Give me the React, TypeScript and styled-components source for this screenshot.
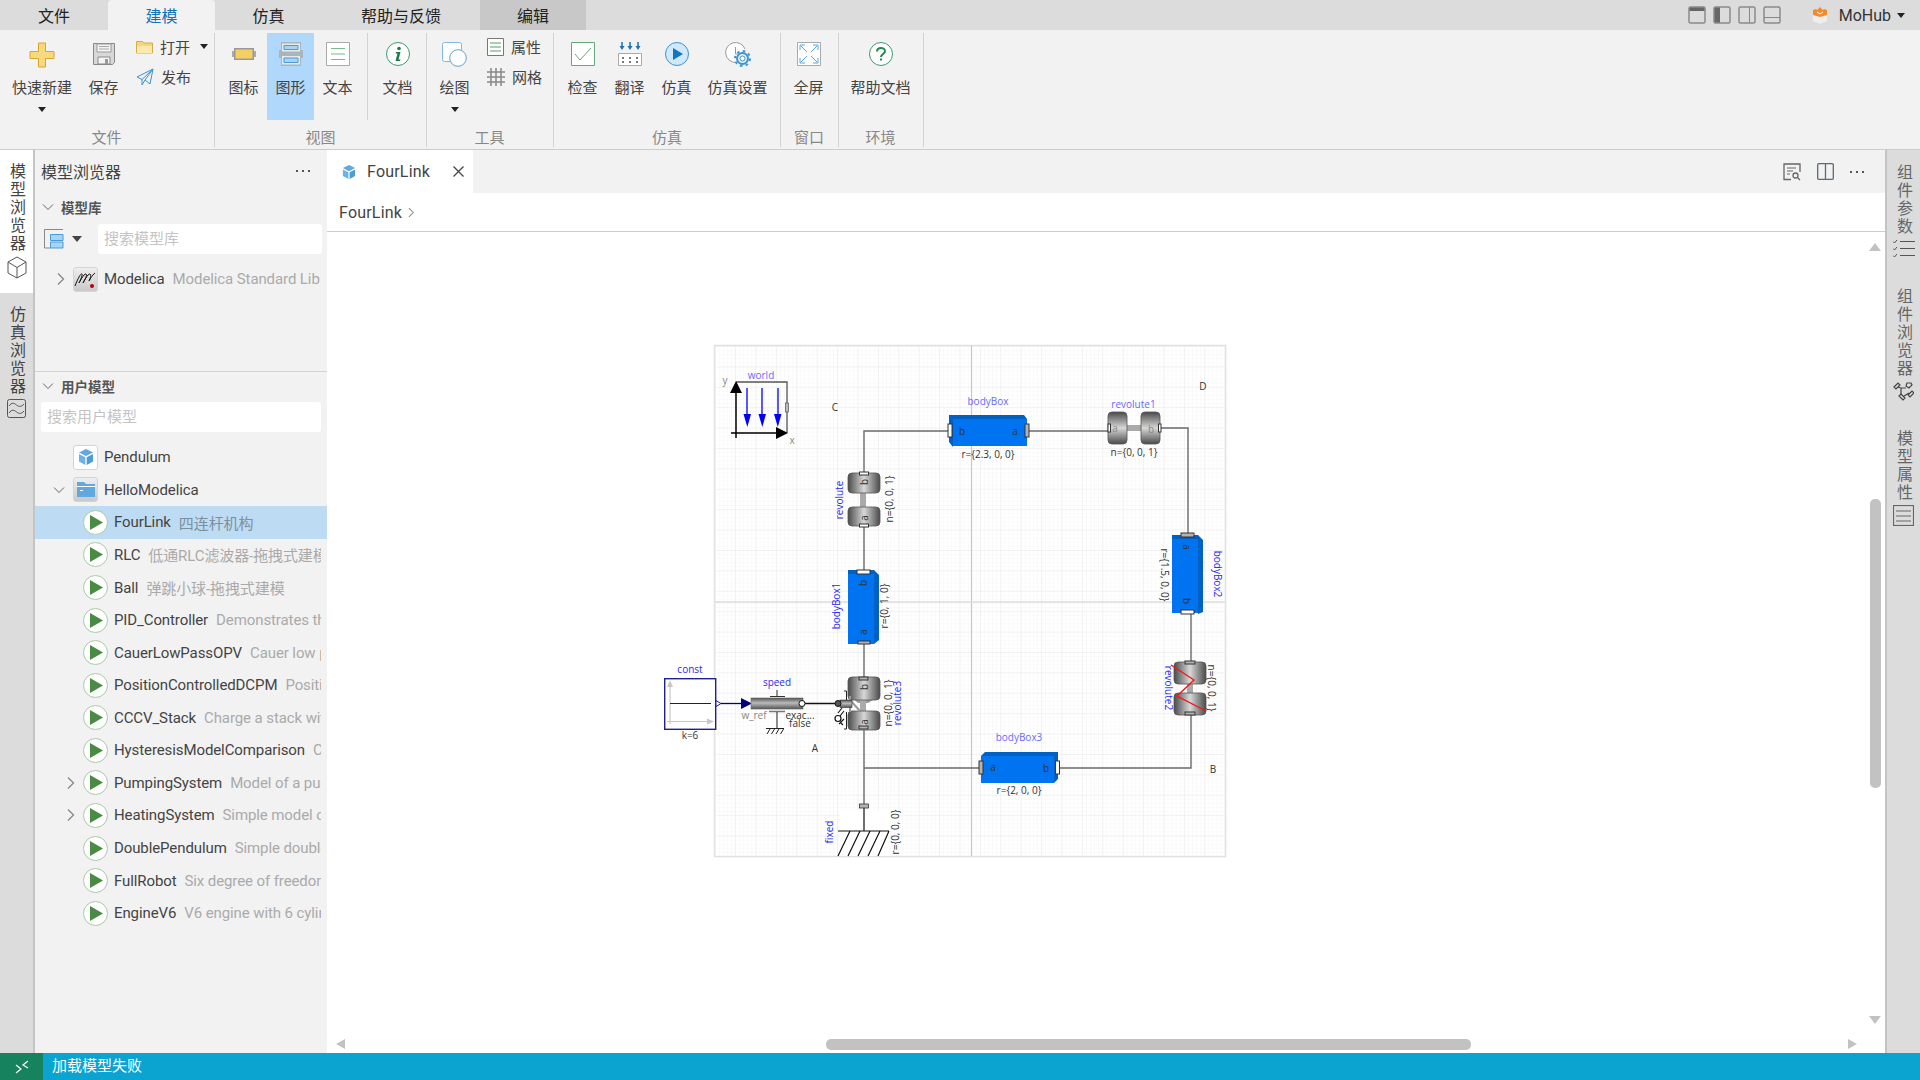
import React from 'react'
import styled, { createGlobalStyle } from 'styled-components'

const GlobalStyle = createGlobalStyle`
  html, body { margin: 0; padding: 0; background: #fff; }
  body { font-family: Roboto, "Noto Sans CJK SC", sans-serif; color: #333; }
`

const Frame = styled.div`
  width: 1920px;
  height: 1080px;
  display: flex;
  flex-direction: column;
  overflow: hidden;
`

/* ---------- menu bar ---------- */
const MenuBar = styled.div`
  height: 30px;
  flex: none;
  display: flex;
  background: #dcdcdc;
`
const MenuTab = styled.div<{ $w: number; $state?: 'active' | 'context' }>`
  width: ${p => p.$w}px;
  height: 30px;
  line-height: 34px;
  text-align: center;
  font-size: 16px;
  color: ${p => (p.$state === 'active' ? '#0f73b8' : '#222')};
  background: ${p => (p.$state === 'active' ? '#f2f2f2' : p.$state === 'context' ? '#c8c8c8' : 'transparent')};
  border-radius: ${p => (p.$state === 'active' ? '4px 4px 0 0' : '0')};
`
const WindowTools = styled.div`
  margin-left: auto;
  display: flex;
  align-items: center;
  gap: 7px;
  padding-right: 15px;
`
const UserName = styled.span`
  font-size: 16px;
  color: #333;
  margin: 0 -1px 0 4px;
`
const UserLogo = styled.span`
  display: flex;
  margin-left: 24px;
`

/* ---------- ribbon ---------- */
const Ribbon = styled.div`
  height: 120px;
  flex: none;
  box-sizing: border-box;
  padding-top: 3px;
  display: flex;
  background: #f2f2f2;
  border-bottom: 1px solid #ccc;
`
const Group = styled.div<{ $w: number; $pad: number }>`
  width: ${p => p.$w}px;
  height: 114px;
  box-sizing: border-box;
  padding-left: ${p => p.$pad}px;
  border-right: 1px solid #d2d2d2;
  display: flex;
  flex-direction: column;
`
const GroupBody = styled.div`
  height: 87px;
  display: flex;
`
const GroupLabel = styled.div`
  margin: 8px 5px 0 0;
  line-height: 20px;
  text-align: center;
  font-size: 15px;
  color: #888;
`
const RibbonButton = styled.div<{ $w?: number; $on?: boolean }>`
  width: ${p => p.$w ?? 47}px;
  height: 87px;
  padding-top: 9px;
  box-sizing: border-box;
  display: grid;
  grid-template-rows: 24px 20px auto;
  row-gap: 12px;
  justify-items: center;
  align-content: start;
  background: ${p => (p.$on ? '#b0d8fc' : 'transparent')};
  flex: none;
`
const ButtonLabel = styled.div`
  height: 20px;
  line-height: 20px;
  font-size: 15px;
  color: #444;
  white-space: nowrap;
`
const Caret = styled.span<{ $size?: number; $color?: string }>`
  display: inline-block;
  width: 0;
  height: 0;
  border-left: ${p => p.$size ?? 4}px solid transparent;
  border-right: ${p => p.$size ?? 4}px solid transparent;
  border-top: ${p => (p.$size ?? 4) + 1}px solid ${p => p.$color ?? '#222'};
`
const ButtonCaret = styled(Caret)`
  margin-top: -3px;
`
const OpenCaret = styled(Caret)`
  margin-left: 3px;
`
const SmallColumn = styled.div<{ $left: number }>`
  margin-left: ${p => p.$left}px;
  display: flex;
  flex-direction: column;
  gap: 9px;
  padding-top: 3px;
`
const SmallButton = styled.div`
  height: 21px;
  display: flex;
  align-items: center;
  gap: 7px;
  font-size: 15px;
  color: #444;
  white-space: nowrap;
`
const InnerRule = styled.div`
  width: 1px;
  height: 87px;
  margin: 0 6px;
  background: #d2d2d2;
  flex: none;
`

/* ---------- main ---------- */
const Main = styled.div`
  flex: 1;
  min-height: 0;
  display: flex;
`
const LeftRail = styled.div`
  width: 35px;
  flex: none;
  box-sizing: border-box;
  border-right: 2px solid #c4c4c4;
  background: #dcdcdc;
`
const RailTab = styled.div<{ $on?: boolean; $h: number; $top: number }>`
  height: ${p => p.$h}px;
  box-sizing: border-box;
  padding-top: ${p => p.$top}px;
  background: ${p => (p.$on ? '#fff' : 'transparent')};
  display: flex;
  flex-direction: column;
  align-items: center;
`
const RailText = styled.div<{ $color?: string }>`
  writing-mode: vertical-rl;
  text-orientation: upright;
  font-size: 16px;
  line-height: 33px;
  letter-spacing: 2px;
  color: ${p => p.$color ?? '#444'};
`
const RailIcon = styled.div`
  margin-top: 3px;
  display: flex;
`
const RightRail = styled.div`
  width: 35px;
  flex: none;
  box-sizing: border-box;
  border-left: 2px solid #c4c4c4;
  background: #dcdcdc;
  padding-top: 14px;
  display: flex;
  flex-direction: column;
  align-items: center;
`
const RailBlock = styled.div<{ $after: number }>`
  display: flex;
  flex-direction: column;
  align-items: center;
  margin-bottom: ${p => p.$after}px;
`
const Panel = styled.div`
  width: 292px;
  flex: none;
  background: #f2f2f2;
  display: flex;
  flex-direction: column;
`
const PanelHeader = styled.div`
  height: 43px;
  flex: none;
  box-sizing: border-box;
  display: flex;
  align-items: center;
  justify-content: space-between;
  padding: 0 17px 2px 6px;
  font-size: 16px;
  color: #444;
`
const Dots = styled.div`
  display: flex;
  gap: 4px;
  i { width: 2px; height: 2px; background: #555; display: block; }
`
const LibrarySection = styled.div`
  height: 179px;
  flex: none;
  box-sizing: border-box;
  border-bottom: 1px solid #d2d2d2;
`
const SectionHead = styled.div`
  height: 30px;
  box-sizing: border-box;
  padding: 0 0 2px 7px;
  display: flex;
  align-items: center;
  gap: 7px;
  font-size: 13.5px;
  font-weight: 700;
  color: #555;
`
const UserHead = styled(SectionHead)`
  padding-bottom: 3px;
`
const LibraryTools = styled.div`
  margin-top: 1px;
  height: 30px;
  display: flex;
  align-items: center;
  padding-left: 9px;
  gap: 8px;
`
const SearchBox = styled.div<{ $w: number; $left?: number }>`
  width: ${p => p.$w}px;
  height: 30px;
  box-sizing: border-box;
  margin-left: ${p => p.$left ?? 0}px;
  padding-left: 6px;
  background: #fff;
  border-radius: 3px;
  line-height: 30px;
  font-size: 15px;
  color: #c4c4c4;
`
const RowList = styled.div<{ $top: number }>`
  margin-top: ${p => p.$top}px;
`
const Row = styled.div<{ $level: number; $on?: boolean }>`
  height: 32.57px;
  box-sizing: border-box;
  display: flex;
  align-items: center;
  padding: 0 6px 0 ${p => 18 + p.$level * 10}px;
  background: ${p => (p.$on ? '#bddcf3' : 'transparent')};
  font-size: 15px;
  letter-spacing: -.1px;
  white-space: nowrap;
`
const ChevronSlot = styled.div`
  width: 20px;
  flex: none;
  display: flex;
  color: #777;
`
const RowName = styled.span`
  margin-left: 6px;
  color: #444;
  flex: none;
`
const RowDesc = styled.span<{ $on?: boolean }>`
  margin-left: 8px;
  color: ${p => (p.$on ? '#7b8fa0' : '#aaa')};
  overflow: hidden;
  flex: 1;
  min-width: 0;
`
const IconTile = styled.div<{ $tone: 'white' | 'grey' }>`
  width: 25px;
  height: 25px;
  flex: none;
  box-sizing: border-box;
  border: 1px solid #d4d4d4;
  border-radius: 3px;
  background: ${p => (p.$tone === 'white' ? '#fff' : 'linear-gradient(#eee, #c9c9c9)')};
  display: flex;
  align-items: center;
  justify-content: center;
`
const PlayDisc = styled.div`
  width: 25px;
  height: 25px;
  flex: none;
  box-sizing: border-box;
  border-radius: 50%;
  border: 1px solid #a9c9a6;
  background: #fff;
  display: flex;
  align-items: center;
  justify-content: center;
`

/* ---------- editor ---------- */
const Editor = styled.div`
  flex: 1;
  min-width: 0;
  display: flex;
  flex-direction: column;
  background: #fff;
`
const TabBar = styled.div`
  height: 43px;
  flex: none;
  display: flex;
  align-items: stretch;
  justify-content: space-between;
  background: #f2f2f2;
`
const DocTab = styled.div`
  width: 146px;
  box-sizing: border-box;
  padding: 0 8px 0 15px;
  background: #fff;
  display: flex;
  align-items: center;
  font-size: 16px;
  letter-spacing: .2px;
  color: #444;
`
const DocTabName = styled.span`
  margin-left: 11px;
  flex: 1;
`
const TabTools = styled.div`
  display: flex;
  align-items: center;
  gap: 16px;
  padding-right: 21px;
`
const Breadcrumb = styled.div`
  height: 39px;
  flex: none;
  box-sizing: border-box;
  border-bottom: 1px solid #ccc;
  display: flex;
  align-items: center;
  gap: 3px;
  padding-left: 12px;
  font-size: 16px;
  letter-spacing: .2px;
  color: #444;
`
const Canvas = styled.div`
  flex: 1;
  min-height: 0;
  position: relative;
  overflow: hidden;
`
const DiagramSvg = styled.svg`
  position: absolute;
  left: 0;
  top: 0;
`
const ScrollArrow = styled.div<{ $dir: 'up' | 'down' | 'left' | 'right'; $x: number; $y: number }>`
  position: absolute;
  left: ${p => p.$x}px;
  top: ${p => p.$y}px;
  width: 0;
  height: 0;
  border: 6px solid transparent;
  border-width: ${p => (p.$dir === 'up' || p.$dir === 'down' ? '0 6px' : '5px 0')};
  ${p => (p.$dir === 'up' ? 'border-bottom: 8px solid #c2c2c2;' : '')}
  ${p => (p.$dir === 'down' ? 'border-top: 8px solid #c2c2c2;' : '')}
  ${p => (p.$dir === 'left' ? 'border-right: 9px solid #c2c2c2;' : '')}
  ${p => (p.$dir === 'right' ? 'border-left: 9px solid #c2c2c2;' : '')}
`
const VThumb = styled.div`
  position: absolute;
  left: 1543px;
  top: 267px;
  width: 11px;
  height: 289px;
  border-radius: 5px;
  background: #c2c2c2;
`
const HThumb = styled.div`
  position: absolute;
  left: 499px;
  top: 807px;
  width: 645px;
  height: 11px;
  border-radius: 5px;
  background: #c2c2c2;
`

/* ---------- status bar ---------- */
const StatusBar = styled.div`
  height: 27px;
  flex: none;
  display: flex;
  align-items: center;
  background: #0ba3cf;
  color: #fff;
  font-size: 15px;
`
const StatusText = styled.span`
  padding-bottom: 4px;
`
const RemoteBox = styled.div`
  width: 43px;
  height: 27px;
  background: #17825e;
  display: flex;
  align-items: center;
  justify-content: center;
  margin-right: 9px;
`

/* ---------- diagram text ---------- */
const Caption = styled.text<{ $tone?: 'name' | 'strong' | 'param' | 'pale' | 'port' }>`
  font-family: "Open Sans", sans-serif;
  font-size: 10px;
  text-anchor: middle;
  fill: ${p =>
    p.$tone === 'name' ? '#6a6aff'
    : p.$tone === 'strong' ? '#2a2af0'
    : p.$tone === 'pale' ? '#888'
    : p.$tone === 'port' ? '#333'
    : '#333'};
`

/* ---------- ribbon icons ---------- */
const Plus = () => (
  <svg width="26" height="26" viewBox="0 0 26 26">
    <path d="M9.500 1h7v8.500h8.500v7h-8.500V25h-7v-8.500H1v-7h8.500z" fill="#f8d97f" stroke="#d8a62a" />
  </svg>
)
const Floppy = () => (
  <svg width="24" height="24" viewBox="0 0 24 24">
    <path d="M1.500 1.500h21v19l-2 2h-19z" fill="#d8d8d8" stroke="#888" />
    <path d="M5 2h14v8H5z" fill="#f4f4f4" stroke="#999" />
    <path d="M7 4.500h10M7 7h10" stroke="#aaa" />
    <path d="M6 15h12v7H6z" fill="#f4f4f4" stroke="#888" />
    <path d="M13 17h3v5h-3z" fill="#999" />
  </svg>
)
const Folder = () => (
  <svg width="17" height="14" viewBox="0 0 17 14">
    <path d="M.500 3V1.500h6l1.500 1.500h8.500v10H.500z" fill="#f5d67c" stroke="#d6ac45" />
    <path d="M1 6h15v7H1z" fill="#fbe9ae" />
  </svg>
)
const Send = () => (
  <svg width="18" height="18" viewBox="0 0 18 18" fill="none" stroke="#3d93cf">
    <path d="M17 1L1 9l5 2.500zM17 1l-3 15-5-4zM6 11.500V17l3-5" strokeLinejoin="round" />
  </svg>
)
const IconView = () => (
  <svg width="24" height="24" viewBox="0 0 24 24">
    <path d="M0 9h24v6H0z" fill="#aaa" />
    <path d="M2 6h20v12H2z" fill="#999" />
    <path d="M3.500 7.500h17v9h-17z" fill="#f6cf62" />
  </svg>
)
const DiagramView = () => (
  <svg width="24" height="24" viewBox="0 0 24 24">
    <path d="M2 0h20v24H2z" fill="#a9b4bd" />
    <path d="M0 8h24v8H0z" fill="#a9b4bd" />
    <path d="M3 1.500h18v8H3zM3 14h18v8.500H3z" fill="#e8e8e8" />
    <path d="M5 3.500h14v4H5zM5 16h14v4.500H5z" fill="#a5d4f5" stroke="#4c9bd4" />
  </svg>
)
const TextView = () => (
  <svg width="24" height="24" viewBox="0 0 24 24">
    <path d="M.500.500h23v23H.500z" fill="#fff" stroke="#aaa" />
    <path d="M5 6.500h14M5 12h14M5 17.500h14" stroke="#7cb98b" />
  </svg>
)
const InfoIcon = () => (
  <svg width="24" height="24" viewBox="0 0 24 24">
    <circle cx="12" cy="12" r="11.500" fill="#fff" stroke="#3c9a6a" />
    <circle cx="13" cy="6.500" r="1.800" fill="#1f7a48" />
    <path d="M10 10h4.500L12.500 17.500h2l-.5 1.500H9.500l2-7.500H9.600z" fill="#1f7a48" />
  </svg>
)
const DrawIcon = () => (
  <svg width="25" height="25" viewBox="0 0 25 25">
    <rect x=".5" y=".5" width="19" height="19" rx="2" fill="#fff" stroke="#7fb8e4" />
    <circle cx="16" cy="16" r="8.300" fill="#fff" stroke="#5ba6dc" />
  </svg>
)
const PropsIcon = () => (
  <svg width="17" height="18" viewBox="0 0 17 18">
    <path d="M.500.500h16v17H.500z" fill="#fff" stroke="#777" />
    <path d="M3 5h11M3 9h11M3 13h11" stroke="#8dbf98" strokeWidth="1.500" />
  </svg>
)
const GridIcon = () => (
  <svg width="18" height="18" viewBox="0 0 18 18" stroke="#888" strokeWidth="1.500">
    <path d="M4 0v18M9 0v18M14 0v18M0 4h18M0 9h18M0 14h18" />
  </svg>
)
const CheckIcon = () => (
  <svg width="24" height="24" viewBox="0 0 24 24" fill="none">
    <path d="M.500.500h23v23H.500z" fill="#fff" stroke="#62a97c" />
    <path d="M4 12l5 6L20 6" stroke="#62a97c" />
  </svg>
)
const TranslateIcon = () => (
  <svg width="24" height="24" viewBox="0 0 24 24">
    <path d="M.500 11.500h23v12H.500z" fill="#fff" stroke="#aaa" />
    <path d="M4 15h2v2H4zM11 15h2v2h-2zM18 15h2v2h-2zM4 19h2v2H4zM11 19h2v2h-2zM18 19h2v2h-2z" fill="#777" />
    <path d="M4 0v5M12 0v5M20 0v5" stroke="#1d6fb0" strokeWidth="1.500" />
    <path d="M1.500 4h5L4 8zM9.500 4h5L12 8zM17.500 4h5L20 8z" fill="#1d6fb0" />
  </svg>
)
const SimulateIcon = () => (
  <svg width="24" height="24" viewBox="0 0 24 24">
    <circle cx="12" cy="12" r="11.500" fill="#cfe8fb" stroke="#3d93cf" />
    <path d="M8 6l10 6-10 6z" fill="#1276bd" />
  </svg>
)
const SimSettingsIcon = () => (
  <svg width="26" height="25" viewBox="0 0 26 25" fill="none">
    <path d="M11 20.500A10 10 0 1 1 20 7" fill="#fff" stroke="#999" />
    <path d="M10.500 5v7h4" stroke="#999" />
    <circle cx="17.500" cy="16.500" r="5.500" fill="#e5f2fb" stroke="#3d93cf" strokeWidth="2" />
    <circle cx="17.500" cy="16.500" r="7.500" stroke="#3d93cf" strokeWidth="2" strokeDasharray="2.500 3.400" />
    <circle cx="17.500" cy="16.500" r="2.500" fill="#fff" stroke="#3d93cf" />
  </svg>
)
const FullscreenIcon = () => (
  <svg width="24" height="24" viewBox="0 0 24 24" fill="none">
    <path d="M.500.500h23v23H.500z" fill="#fff" stroke="#aaa" />
    <path d="M4 4l6 6M20 4l-6 6M4 20l6-6M20 20l-6-6M3 8V3h5M21 8V3h-5M3 16v5h5M21 16v5h-5" stroke="#56a9de" />
  </svg>
)
const HelpIcon = () => (
  <svg width="24" height="24" viewBox="0 0 24 24" fill="none">
    <circle cx="12" cy="12" r="11.500" fill="#fff" stroke="#3c9a6a" />
    <path d="M8 9.500C8 7 10 6 12 6s4 1.200 4 3.300c0 2.700-4 2.700-4 5.700" stroke="#1f8a50" strokeWidth="2" />
    <path d="M11 16.500h2v2h-2z" fill="#1f8a50" />
  </svg>
)

/* ---------- little icons ---------- */
const LayoutIcon = ({ fill }: { fill: 'top' | 'left' | 'right' | 'bottom' }) => (
  <svg width="18" height="18" viewBox="0 0 18 18" fill="none">
    {fill === 'top' && <path d="M1 1h16v4H1z" fill="#666" />}
    {fill === 'left' && <path d="M1 1h6v16H1z" fill="#666" />}
    {fill === 'right' && <path d="M11.500 1v16" stroke="#888" />}
    {fill === 'bottom' && <path d="M1 11.500h16" stroke="#888" />}
    <rect x="1" y="1" width="16" height="16" rx="1.500" stroke="#8a8a8a" strokeWidth="1.500" />
  </svg>
)
const MoHubLogo = () => (
  <svg width="16" height="17" viewBox="0 0 16 17">
    <path d="M8 5l7 3v6l-7 3-7-3V8z" fill="#eee" />
    <path d="M1 3l3-1 1 1 3-3 3 3 1-1 3 1v5l-7 2-7-2z" fill="#f58a2c" />
    <path d="M5 5l3 2 3-2" stroke="#fff" fill="none" />
  </svg>
)
const ChevronDown = () => (
  <svg width="12" height="12" viewBox="0 0 12 12" fill="none" stroke="#666">
    <path d="M1 3.500l5 5 5-5" />
  </svg>
)
const ChevronRight = ({ size = 14 }: { size?: number }) => (
  <svg width={size} height={size} viewBox="0 0 14 14" fill="none" stroke="#888" strokeWidth="1.300">
    <path d="M5 1.500l5.500 5.500L5 12.500" />
  </svg>
)
const CubeOutline = () => (
  <svg width="20" height="23" viewBox="0 0 20 23" fill="none" stroke="#555">
    <path d="M10 1l9 5v11l-9 5-9-5V6zM1 6l9 5.500L19 6M10 11.500V22" />
  </svg>
)
const WaveIcon = () => (
  <svg width="19" height="19" viewBox="0 0 19 19" fill="none" stroke="#555">
    <rect x=".5" y=".5" width="18" height="18" rx="2" />
    <path d="M2 7c3-4 5-3 7.500-1s5 2 7.500-1M2 14c3-4 5-3 7.500-1s5 2 7.500-1" />
  </svg>
)
const ChecklistIcon = () => (
  <svg width="22" height="19" viewBox="0 0 22 19" fill="none" stroke="#555">
    <path d="M7 2.500h15M7 9.500h15M7 16.500h15" />
    <path d="M0 2.500l1.500 1.500L4 1M0 9.500L1.500 11 4 8M0 16.500L1.500 18 4 15" />
  </svg>
)
const ComponentIcon = () => (
  <svg width="21" height="21" viewBox="0 0 21 21" fill="none" stroke="#444" strokeWidth="1.200">
    <path d="M1 6l4-4 2 2-4 4zM15 14l4-4 2 2-4 4zM8 13l4 4-2 2-4-4zM14 2l4 0 1 2-3 3-3-2z" />
    <path d="M5 6l3 1h5M8 7v7M11 15l5-3" />
  </svg>
)
const ListBoxIcon = () => (
  <svg width="21" height="21" viewBox="0 0 21 21" fill="none" stroke="#666">
    <rect x=".5" y=".5" width="20" height="20" strokeWidth="1.200" />
    <path d="M3 6h15M3 11h15M3 16h15" />
  </svg>
)
const LibraryMode = () => (
  <svg width="20" height="20" viewBox="0 0 20 20" fill="none">
    <path d="M19 .5H.5V19h6" stroke="#888" />
    <path d="M6.500 5.500H19v6H6.500zM6.500 13H19v6H6.500z" fill="#a5d4f5" stroke="#4c9bd4" />
  </svg>
)
const ModelicaIcon = () => (
  <svg width="23" height="21" viewBox="0 0 23 21" fill="none" stroke="#111">
    <path d="M1 17C4 9 7 4 8 5s-3 9-3 9 5-10 7-9-3 9-3 9 5-10 7-9-1 7-1 7 3-6 6-8" strokeWidth="1" />
    <circle cx="18" cy="17" r="2" fill="#b00000" stroke="none" />
  </svg>
)
const BlueCube = ({ size = 16 }: { size?: number }) => (
  <svg width={size} height={size} viewBox="0 0 16 16">
    <path d="M8 0l7 3.500L8 7 1 3.500z" fill="#5fa8e0" />
    <path d="M1 5l6.300 3.200V16L1 12.500z" fill="#6db2e6" />
    <path d="M15 5L8.700 8.200V16l6.300-3.500z" fill="#4e9bd6" />
  </svg>
)
const FolderBlue = () => (
  <svg width="18" height="15" viewBox="0 0 18 15">
    <path d="M0 0h7l2 2h9v13H0z" fill="#5fa8e0" />
    <path d="M0 4h18v1H0z" fill="#fff" />
    <path d="M3 8h3v1H3z" fill="#fff" />
  </svg>
)
const PlayMark = () => (
  <svg width="14" height="15" viewBox="0 0 14 15">
    <path d="M1 0l13 7.500L1 15z" fill="#4a8b44" />
  </svg>
)
const Close = () => (
  <svg width="13" height="13" viewBox="0 0 13 13" stroke="#444" strokeWidth="1.300">
    <path d="M1.500 1.500l10 10M11.500 1.500l-10 10" />
  </svg>
)
const FindDoc = () => (
  <svg width="18" height="18" viewBox="0 0 18 18" fill="none" stroke="#666">
    <path d="M8 16.500H1V1h16v8" strokeWidth="1.300" />
    <path d="M4 5h9M4 8h6M4 11h3" />
    <circle cx="12.500" cy="12.500" r="2.500" strokeWidth="1.300" />
    <path d="M14.500 14.500L17 17" strokeWidth="1.300" />
  </svg>
)
const SplitIcon = () => (
  <svg width="17" height="17" viewBox="0 0 17 17" fill="none" stroke="#5a6a78" strokeWidth="1.300">
    <rect x=".7" y=".7" width="15.600" height="15.600" rx="1" />
    <path d="M8.500 1v15" />
  </svg>
)
const RemoteMark = () => (
  <svg width="14" height="14" viewBox="0 0 14 14" fill="none" stroke="#fff" strokeWidth="1.200">
    <path d="M1 5l5 4-5 4M13 1L8 5l5 3" />
  </svg>
)

/* ---------- diagram parts ---------- */
const Port = ({ x, y, w, h, tone }: { x: number; y: number; w: number; h: number; tone: 'white' | 'grey' }) => (
  <rect x={x} y={y} width={w} height={h} fill={tone === 'white' ? '#fff' : '#b4b4b4'} stroke="#333" strokeWidth="1" />
)
const Wire = ({ d }: { d: string }) => <path d={d} fill="none" stroke="#6a6a6a" strokeWidth="1.400" />

const Disc = ({ x, y, w, h, grad }: { x: number; y: number; w: number; h: number; grad: 'acrossX' | 'acrossY' }) => (
  <rect x={x} y={y} width={w} height={h} rx="4" fill={`url(#${grad})`} stroke="#555" strokeWidth=".8" />
)

const RotatedCaption = ({ x, y, deg, tone, children }: { x: number; y: number; deg: number; tone?: 'name' | 'strong' | 'param'; children: React.ReactNode }) => (
  <Caption $tone={tone} x={x} y={y} transform={`rotate(${deg} ${x} ${y})`}>{children}</Caption>
)

const Diagram = () => (
  <DiagramSvg width="1558" height="821" viewBox="327 232 1558 821">
    <defs>
      <pattern id="minor" x="714.7" y="346" width="4.08" height="4.08" patternUnits="userSpaceOnUse">
        <path d="M4.080 0H0V4.080" fill="none" stroke="#f6f6f6" strokeWidth="1" />
      </pattern>
      <pattern id="major" x="714.7" y="346" width="20.4" height="20.4" patternUnits="userSpaceOnUse">
        <path d="M20.400 0H0V20.400" fill="none" stroke="#e9e9e9" strokeWidth="1" />
      </pattern>
      <linearGradient id="acrossX" x1="0" y1="0" x2="1" y2="0">
        <stop offset="0" stopColor="#4a4a4a" />
        <stop offset=".5" stopColor="#d8d8d8" />
        <stop offset="1" stopColor="#4a4a4a" />
      </linearGradient>
      <linearGradient id="acrossY" x1="0" y1="0" x2="0" y2="1">
        <stop offset="0" stopColor="#4a4a4a" />
        <stop offset=".5" stopColor="#d8d8d8" />
        <stop offset="1" stopColor="#4a4a4a" />
      </linearGradient>
      <linearGradient id="speedBar" x1="0" y1="0" x2="0" y2="1">
        <stop offset="0" stopColor="#555" />
        <stop offset=".45" stopColor="#bbb" />
        <stop offset="1" stopColor="#555" />
      </linearGradient>
    </defs>

    {/* paper */}
    <rect x="714.5" y="345.5" width="511" height="511" fill="#fff" stroke="#e0e0e0" strokeWidth="1.500" />
    <rect x="714.7" y="346" width="510" height="510" fill="url(#minor)" />
    <rect x="714.7" y="346" width="510" height="510" fill="url(#major)" />
    <path d="M971.500 346v510" stroke="#c8c8c8" strokeWidth="1.200" />
    <path d="M715 602h510" stroke="#dcdcdc" strokeWidth="1.500" />

    {/* wires */}
    <Wire d="M948 431H864V473" />
    <Wire d="M1029 431H1108" />
    <Wire d="M1161 428H1188V535" />
    <Wire d="M1191 614V662" />
    <Wire d="M1191 715V768H1060" />
    <Wire d="M979 768H864" />
    <Wire d="M864 527V570" />
    <Wire d="M864 644V677" />
    <Wire d="M864 730V805" />

    {/* world */}
    <path d="M736 382H787V433" fill="none" stroke="#555" strokeWidth="1.300" />
    <path d="M736 384V438M731 433H780" stroke="#000" strokeWidth="1.500" />
    <path d="M736 381l6 12h-12zM788 433l-12 6v-12z" fill="#000" />
    <path d="M747 388v27M762 388v27M778 388v27" stroke="#0000ff" strokeWidth="1.300" />
    <path d="M743.500 414h7.500L747.300 427zM758.500 414h7.500L762.300 427zM774 414h7.500L777.800 427z" fill="#0000ff" />
    <rect x="785.500" y="403" width="3" height="9" fill="#bbb" stroke="#555" strokeWidth=".7" />
    <Caption $tone="name" x="761" y="379">world</Caption>
    <Caption $tone="pale" x="725" y="384">y</Caption>
    <Caption $tone="pale" x="792" y="444">x</Caption>
    <Caption x="835" y="411">C</Caption>
    <Caption x="1203" y="390">D</Caption>
    <Caption x="815" y="752">A</Caption>
    <Caption x="1213" y="773">B</Caption>

    {/* bodyBox */}
    <path d="M953 419H1027V446H953z" fill="#0073f0" />
    <path d="M949 415H1024L1027 419H953zM949 415L953 419V447L949 442z" fill="#0060c4" />
    <Port x={948} y={424} w={4} h={13} tone="white" />
    <Port x={1025} y={424} w={4} h={13} tone="grey" />
    <Caption $tone="port" x="962" y="435">b</Caption>
    <Caption $tone="port" x="1015" y="435">a</Caption>
    <Caption $tone="name" x="988" y="405">bodyBox</Caption>
    <Caption x="988" y="458">{'r={2.3, 0, 0}'}</Caption>

    {/* revolute1 */}
    <rect x="1127" y="425" width="14" height="6" fill="#aaa" />
    <Disc x={1108} y={412} w={19} h={32} grad="acrossY" />
    <Disc x={1141} y={412} w={19} h={32} grad="acrossY" />
    <Port x={1108} y={424} w={2.500} h={8} tone="white" />
    <Port x={1158.500} y={424} w={2.500} h={8} tone="white" />
    <Caption $tone="pale" x="1115" y="432">a</Caption>
    <Caption $tone="pale" x="1151" y="433">b</Caption>
    <Caption $tone="name" x="1133.500" y="408">revolute1</Caption>
    <Caption x="1134" y="456">{'n={0, 0, 1}'}</Caption>

    {/* bodyBox2 */}
    <path d="M1172 539H1198V613H1172z" fill="#0073f0" />
    <path d="M1172 535H1198L1203 540V612L1198 614V539H1172z" fill="#0060c4" />
    <Port x={1181} y={533} w={13} h={4} tone="grey" />
    <Port x={1181} y={610} w={13} h={4} tone="white" />
    <RotatedCaption x={1183} y={547} deg={90}>a</RotatedCaption>
    <RotatedCaption x={1183} y={601} deg={90}>b</RotatedCaption>
    <RotatedCaption x={1214} y={574} deg={90} tone="strong">bodyBox2</RotatedCaption>
    <RotatedCaption x={1161} y={575} deg={90}>{'r={1.5, 0, 0}'}</RotatedCaption>

    {/* revolute2 */}
    <rect x="1187" y="684" width="6" height="9" fill="#aaa" />
    <Disc x={1174} y={662} w={32} h={22} grad="acrossX" />
    <Disc x={1174} y={693} w={32} h={22} grad="acrossX" />
    <Port x={1185} y={661} w={10} h={3} tone="grey" />
    <Port x={1185} y={712} w={10} h={3} tone="grey" />
    <path d="M1171 665L1194 680L1177 696L1206 711" fill="none" stroke="#f01818" strokeWidth="1.400" />
    <RotatedCaption x={1165} y={688} deg={90} tone="strong">revolute2</RotatedCaption>
    <RotatedCaption x={1208} y={688} deg={90}>{'n={0, 0, 1}'}</RotatedCaption>

    {/* bodyBox3 */}
    <path d="M981 756H1054V783H981z" fill="#0073f0" />
    <path d="M981 756L985 752H1058L1054 756zM1054 756L1058 752V779L1054 783z" fill="#0060c4" />
    <Port x={979} y={761} w={4} h={13} tone="grey" />
    <Port x={1055.500} y={761} w={4} h={13} tone="white" />
    <Caption $tone="port" x="993" y="771">a</Caption>
    <Caption $tone="port" x="1046" y="772">b</Caption>
    <Caption $tone="name" x="1019" y="741">bodyBox3</Caption>
    <Caption x="1019" y="794">{'r={2, 0, 0}'}</Caption>

    {/* revolute */}
    <rect x="860" y="493" width="6" height="14" fill="#aaa" />
    <Disc x={848} y={473} w={32} h={20} grad="acrossX" />
    <Disc x={848} y={507} w={32} h={19} grad="acrossX" />
    <Port x={859.500} y={472} w={9} h={3} tone="white" />
    <Port x={859.500} y={524} w={9} h={3} tone="white" />
    <RotatedCaption x={868} y={482} deg={-90}>b</RotatedCaption>
    <RotatedCaption x={868} y={518} deg={-90}>a</RotatedCaption>
    <RotatedCaption x={843} y={500} deg={-90} tone="strong">revolute</RotatedCaption>
    <RotatedCaption x={893} y={499} deg={-90}>{'n={0, 0, 1}'}</RotatedCaption>

    {/* bodyBox1 */}
    <path d="M848 574H874V644H848z" fill="#0073f0" />
    <path d="M848 570H874L879 575V640L874 644V574H848z" fill="#0060c4" />
    <Port x={857} y={570} w={13} h={4} tone="white" />
    <Port x={858} y={641} w={12} h={3} tone="grey" />
    <RotatedCaption x={867} y={583} deg={-90}>b</RotatedCaption>
    <RotatedCaption x={867} y={632} deg={-90}>a</RotatedCaption>
    <RotatedCaption x={840} y={606} deg={-90} tone="strong">bodyBox1</RotatedCaption>
    <RotatedCaption x={888} y={606} deg={-90}>{'r={0, 1, 0}'}</RotatedCaption>

    {/* revolute3 */}
    <path d="M852 698H876L868 703H858z" fill="#999" />
    <rect x="860" y="700" width="6" height="12" fill="#aaa" />
    <Disc x={848} y={677} w={32} h={23} grad="acrossX" />
    <Disc x={848} y={711} w={32} h={19} grad="acrossX" />
    <path d="M850 700L860 711M850 696L850 712" stroke="#999" strokeWidth="2" fill="none" />
    <Port x={859} y={677} w={9} h={3} tone="grey" />
    <Port x={859} y={726} w={9} h={3} tone="grey" />
    <RotatedCaption x={868} y={687} deg={-90}>b</RotatedCaption>
    <RotatedCaption x={868} y={722} deg={-90}>a</RotatedCaption>
    <RotatedCaption x={892} y={703} deg={-90}>{'n={0, 0, 1}'}</RotatedCaption>
    <RotatedCaption x={901} y={703} deg={-90} tone="strong">revolute3</RotatedCaption>
    <path d="M804 703.500H838" stroke="#111" strokeWidth="1.300" />
    <rect x="840" y="700" width="12" height="7.500" fill="url(#speedBar)" stroke="#333" strokeWidth=".6" />
    <circle cx="838" cy="703.500" r="3" fill="#555" stroke="#111" />
    <path d="M844 691H846.500V700M844 729H846.500V712" fill="none" stroke="#222" strokeWidth="1" />
    <circle cx="838" cy="718.500" r="3" fill="#fff" stroke="#111" strokeWidth="1.200" />
    <path d="M838 713l4-5M840 716l4-5M839 724l5-5M843 725l-3-3" stroke="#111" strokeWidth="1.100" />

    {/* fixed */}
    <rect x="840" y="810" width="50" height="46" fill="#fff" />
    <path d="M864 806V831" stroke="#222" strokeWidth="1.300" />
    <rect x="859.500" y="804" width="9" height="4" fill="#b4b4b4" stroke="#333" strokeWidth=".8" />
    <path d="M838 831H889M838 856L850 831M848 856L860 831M858 856L870 831M868 856L880 831M878 856L889 831" stroke="#111" strokeWidth="1.200" fill="none" />
    <RotatedCaption x={833} y={832} deg={-90} tone="strong">fixed</RotatedCaption>
    <RotatedCaption x={899} y={832} deg={-90}>{'r={0, 0, 0}'}</RotatedCaption>

    {/* const */}
    <rect x="664.700" y="678.700" width="51" height="50.600" fill="#fff" stroke="#20208c" strokeWidth="1.400" />
    <path d="M670 685V724M667 721.500H708" stroke="#c8c8c8" strokeWidth="1.200" />
    <path d="M670 680l3 7h-6zM714 721.500l-7 3v-6z" fill="#c8c8c8" />
    <path d="M670 703.500H711" stroke="#222" strokeWidth="1.100" />
    <path d="M716 700.500l5 3-5 3z" fill="#fff" stroke="#20208c" />
    <path d="M721 703.500H741" stroke="#000080" strokeWidth="1.300" />
    <path d="M741 698l11 5.500-11 5.500z" fill="#000080" />
    <Caption $tone="strong" x="690" y="673">const</Caption>
    <Caption x="690" y="739">k=6</Caption>

    {/* speed */}
    <rect x="751" y="698" width="52" height="11" fill="url(#speedBar)" stroke="#666" strokeWidth=".6" />
    <circle cx="802" cy="703.500" r="3" fill="#fff" stroke="#111" />
    <path d="M777 690V696M770 696.500H785" stroke="#333" strokeWidth="1" />
    <path d="M769 711.500H785" stroke="#777" strokeWidth="1.500" />
    <path d="M777 712V728M766 728.500H784M767 734l3-5M771.500 734l3-5M776 734l3-5M780.500 734l3-5" stroke="#222" strokeWidth="1" />
    <Caption $tone="strong" x="777" y="686">speed</Caption>
    <Caption $tone="pale" x="754" y="719">w_ref</Caption>
    <Caption x="800" y="719">exac...</Caption>
    <Caption x="800" y="727">false</Caption>
  </DiagramSvg>
)

const rows: { name: string; desc: string; on?: boolean; more?: boolean }[] = [
  { name: 'FourLink', desc: '四连杆机构', on: true },
  { name: 'RLC', desc: '低通RLC滤波器-拖拽式建模' },
  { name: 'Ball', desc: '弹跳小球-拖拽式建模' },
  { name: 'PID_Controller', desc: 'Demonstrates the usage' },
  { name: 'CauerLowPassOPV', desc: 'Cauer low pass filter' },
  { name: 'PositionControlledDCPM', desc: 'Position control' },
  { name: 'CCCV_Stack', desc: 'Charge a stack with' },
  { name: 'HysteresisModelComparison', desc: 'Comparison' },
  { name: 'PumpingSystem', desc: 'Model of a pumping', more: true },
  { name: 'HeatingSystem', desc: 'Simple model of a', more: true },
  { name: 'DoublePendulum', desc: 'Simple double pendulum' },
  { name: 'FullRobot', desc: 'Six degree of freedom' },
  { name: 'EngineV6', desc: 'V6 engine with 6 cylinders' },
]

const App: React.FC = () => (
  <Frame>
    <GlobalStyle />
    <MenuBar>
      <MenuTab $w={108}>文件</MenuTab>
      <MenuTab $w={107} $state="active">建模</MenuTab>
      <MenuTab $w={107}>仿真</MenuTab>
      <MenuTab $w={158}>帮助与反馈</MenuTab>
      <MenuTab $w={106} $state="context">编辑</MenuTab>
      <WindowTools>
        <LayoutIcon fill="top" />
        <LayoutIcon fill="left" />
        <LayoutIcon fill="right" />
        <LayoutIcon fill="bottom" />
        <UserLogo><MoHubLogo /></UserLogo>
        <UserName>MoHub</UserName>
        <Caret />
      </WindowTools>
    </MenuBar>

    <Ribbon>
      <Group $w={215} $pad={4}>
        <GroupBody>
          <RibbonButton $w={76}><Plus /><ButtonLabel>快速新建</ButtonLabel><ButtonCaret /></RibbonButton>
          <RibbonButton><Floppy /><ButtonLabel>保存</ButtonLabel></RibbonButton>
          <SmallColumn $left={9}>
            <SmallButton><Folder />打开<OpenCaret /></SmallButton>
            <SmallButton><Send />发布</SmallButton>
          </SmallColumn>
        </GroupBody>
        <GroupLabel>文件</GroupLabel>
      </Group>
      <Group $w={212} $pad={5}>
        <GroupBody>
          <RibbonButton><IconView /><ButtonLabel>图标</ButtonLabel></RibbonButton>
          <RibbonButton $on><DiagramView /><ButtonLabel>图形</ButtonLabel></RibbonButton>
          <RibbonButton><TextView /><ButtonLabel>文本</ButtonLabel></RibbonButton>
          <InnerRule />
          <RibbonButton><InfoIcon /><ButtonLabel>文档</ButtonLabel></RibbonButton>
        </GroupBody>
        <GroupLabel>视图</GroupLabel>
      </Group>
      <Group $w={127} $pad={4}>
        <GroupBody>
          <RibbonButton><DrawIcon /><ButtonLabel>绘图</ButtonLabel><ButtonCaret /></RibbonButton>
          <SmallColumn $left={9}>
            <SmallButton><PropsIcon />属性</SmallButton>
            <SmallButton><GridIcon />网格</SmallButton>
          </SmallColumn>
        </GroupBody>
        <GroupLabel>工具</GroupLabel>
      </Group>
      <Group $w={227} $pad={5}>
        <GroupBody>
          <RibbonButton><CheckIcon /><ButtonLabel>检查</ButtonLabel></RibbonButton>
          <RibbonButton><TranslateIcon /><ButtonLabel>翻译</ButtonLabel></RibbonButton>
          <RibbonButton><SimulateIcon /><ButtonLabel>仿真</ButtonLabel></RibbonButton>
          <RibbonButton $w={75}><SimSettingsIcon /><ButtonLabel>仿真设置</ButtonLabel></RibbonButton>
        </GroupBody>
        <GroupLabel>仿真</GroupLabel>
      </Group>
      <Group $w={58} $pad={4}>
        <GroupBody>
          <RibbonButton><FullscreenIcon /><ButtonLabel>全屏</ButtonLabel></RibbonButton>
        </GroupBody>
        <GroupLabel>窗口</GroupLabel>
      </Group>
      <Group $w={85} $pad={4}>
        <GroupBody>
          <RibbonButton $w={75}><HelpIcon /><ButtonLabel>帮助文档</ButtonLabel></RibbonButton>
        </GroupBody>
        <GroupLabel>环境</GroupLabel>
      </Group>
    </Ribbon>

    <Main>
      <LeftRail>
        <RailTab $on $h={143} $top={13}>
          <RailText>模型浏览器</RailText>
          <RailIcon><CubeOutline /></RailIcon>
        </RailTab>
        <RailTab $h={200} $top={13}>
          <RailText>仿真浏览器</RailText>
          <RailIcon><WaveIcon /></RailIcon>
        </RailTab>
      </LeftRail>

      <Panel>
        <PanelHeader>
          模型浏览器
          <Dots><i /><i /><i /></Dots>
        </PanelHeader>
        <LibrarySection>
          <SectionHead><ChevronDown />模型库</SectionHead>
          <LibraryTools>
            <LibraryMode />
            <Caret $size={5} $color="#444" />
            <SearchBox $w={224} $left={8}>搜索模型库</SearchBox>
          </LibraryTools>
          <RowList $top={9}>
            <Row $level={0}>
              <ChevronSlot><ChevronRight /></ChevronSlot>
              <IconTile $tone="grey"><ModelicaIcon /></IconTile>
              <RowName>Modelica</RowName>
              <RowDesc>Modelica Standard Lib</RowDesc>
            </Row>
          </RowList>
        </LibrarySection>
        <UserHead><ChevronDown />用户模型</UserHead>
        <SearchBox $w={280} $left={6}>搜索用户模型</SearchBox>
        <RowList $top={9}>
          <Row $level={0}>
            <ChevronSlot />
            <IconTile $tone="white"><BlueCube /></IconTile>
            <RowName>Pendulum</RowName>
          </Row>
          <Row $level={0}>
            <ChevronSlot><ChevronDown /></ChevronSlot>
            <IconTile $tone="grey"><FolderBlue /></IconTile>
            <RowName>HelloModelica</RowName>
          </Row>
          {rows.map(r => (
            <Row $level={1} $on={r.on} key={r.name}>
              <ChevronSlot>{r.more && <ChevronRight />}</ChevronSlot>
              <PlayDisc><PlayMark /></PlayDisc>
              <RowName>{r.name}</RowName>
              <RowDesc $on={r.on}>{r.desc}</RowDesc>
            </Row>
          ))}
        </RowList>
      </Panel>

      <Editor>
        <TabBar>
          <DocTab>
            <BlueCube size={14} />
            <DocTabName>FourLink</DocTabName>
            <Close />
          </DocTab>
          <TabTools>
            <FindDoc />
            <SplitIcon />
            <Dots><i /><i /><i /></Dots>
          </TabTools>
        </TabBar>
        <Breadcrumb>FourLink <ChevronRight size={11} /></Breadcrumb>
        <Canvas>
          <Diagram />
          <ScrollArrow $dir="up" $x={1542} $y={11} />
          <VThumb />
          <ScrollArrow $dir="down" $x={1542} $y={784} />
          <ScrollArrow $dir="left" $x={9} $y={807} />
          <HThumb />
          <ScrollArrow $dir="right" $x={1521} $y={807} />
        </Canvas>
      </Editor>

      <RightRail>
        <RailBlock $after={30}>
          <RailText $color="#666">组件参数</RailText>
          <RailIcon><ChecklistIcon /></RailIcon>
        </RailBlock>
        <RailBlock $after={28}>
          <RailText $color="#666">组件浏览器</RailText>
          <RailIcon><ComponentIcon /></RailIcon>
        </RailBlock>
        <RailBlock $after={0}>
          <RailText $color="#666">模型属性</RailText>
          <RailIcon><ListBoxIcon /></RailIcon>
        </RailBlock>
      </RightRail>
    </Main>

    <StatusBar>
      <RemoteBox><RemoteMark /></RemoteBox>
      <StatusText>加载模型失败</StatusText>
    </StatusBar>
  </Frame>
)

export default App
